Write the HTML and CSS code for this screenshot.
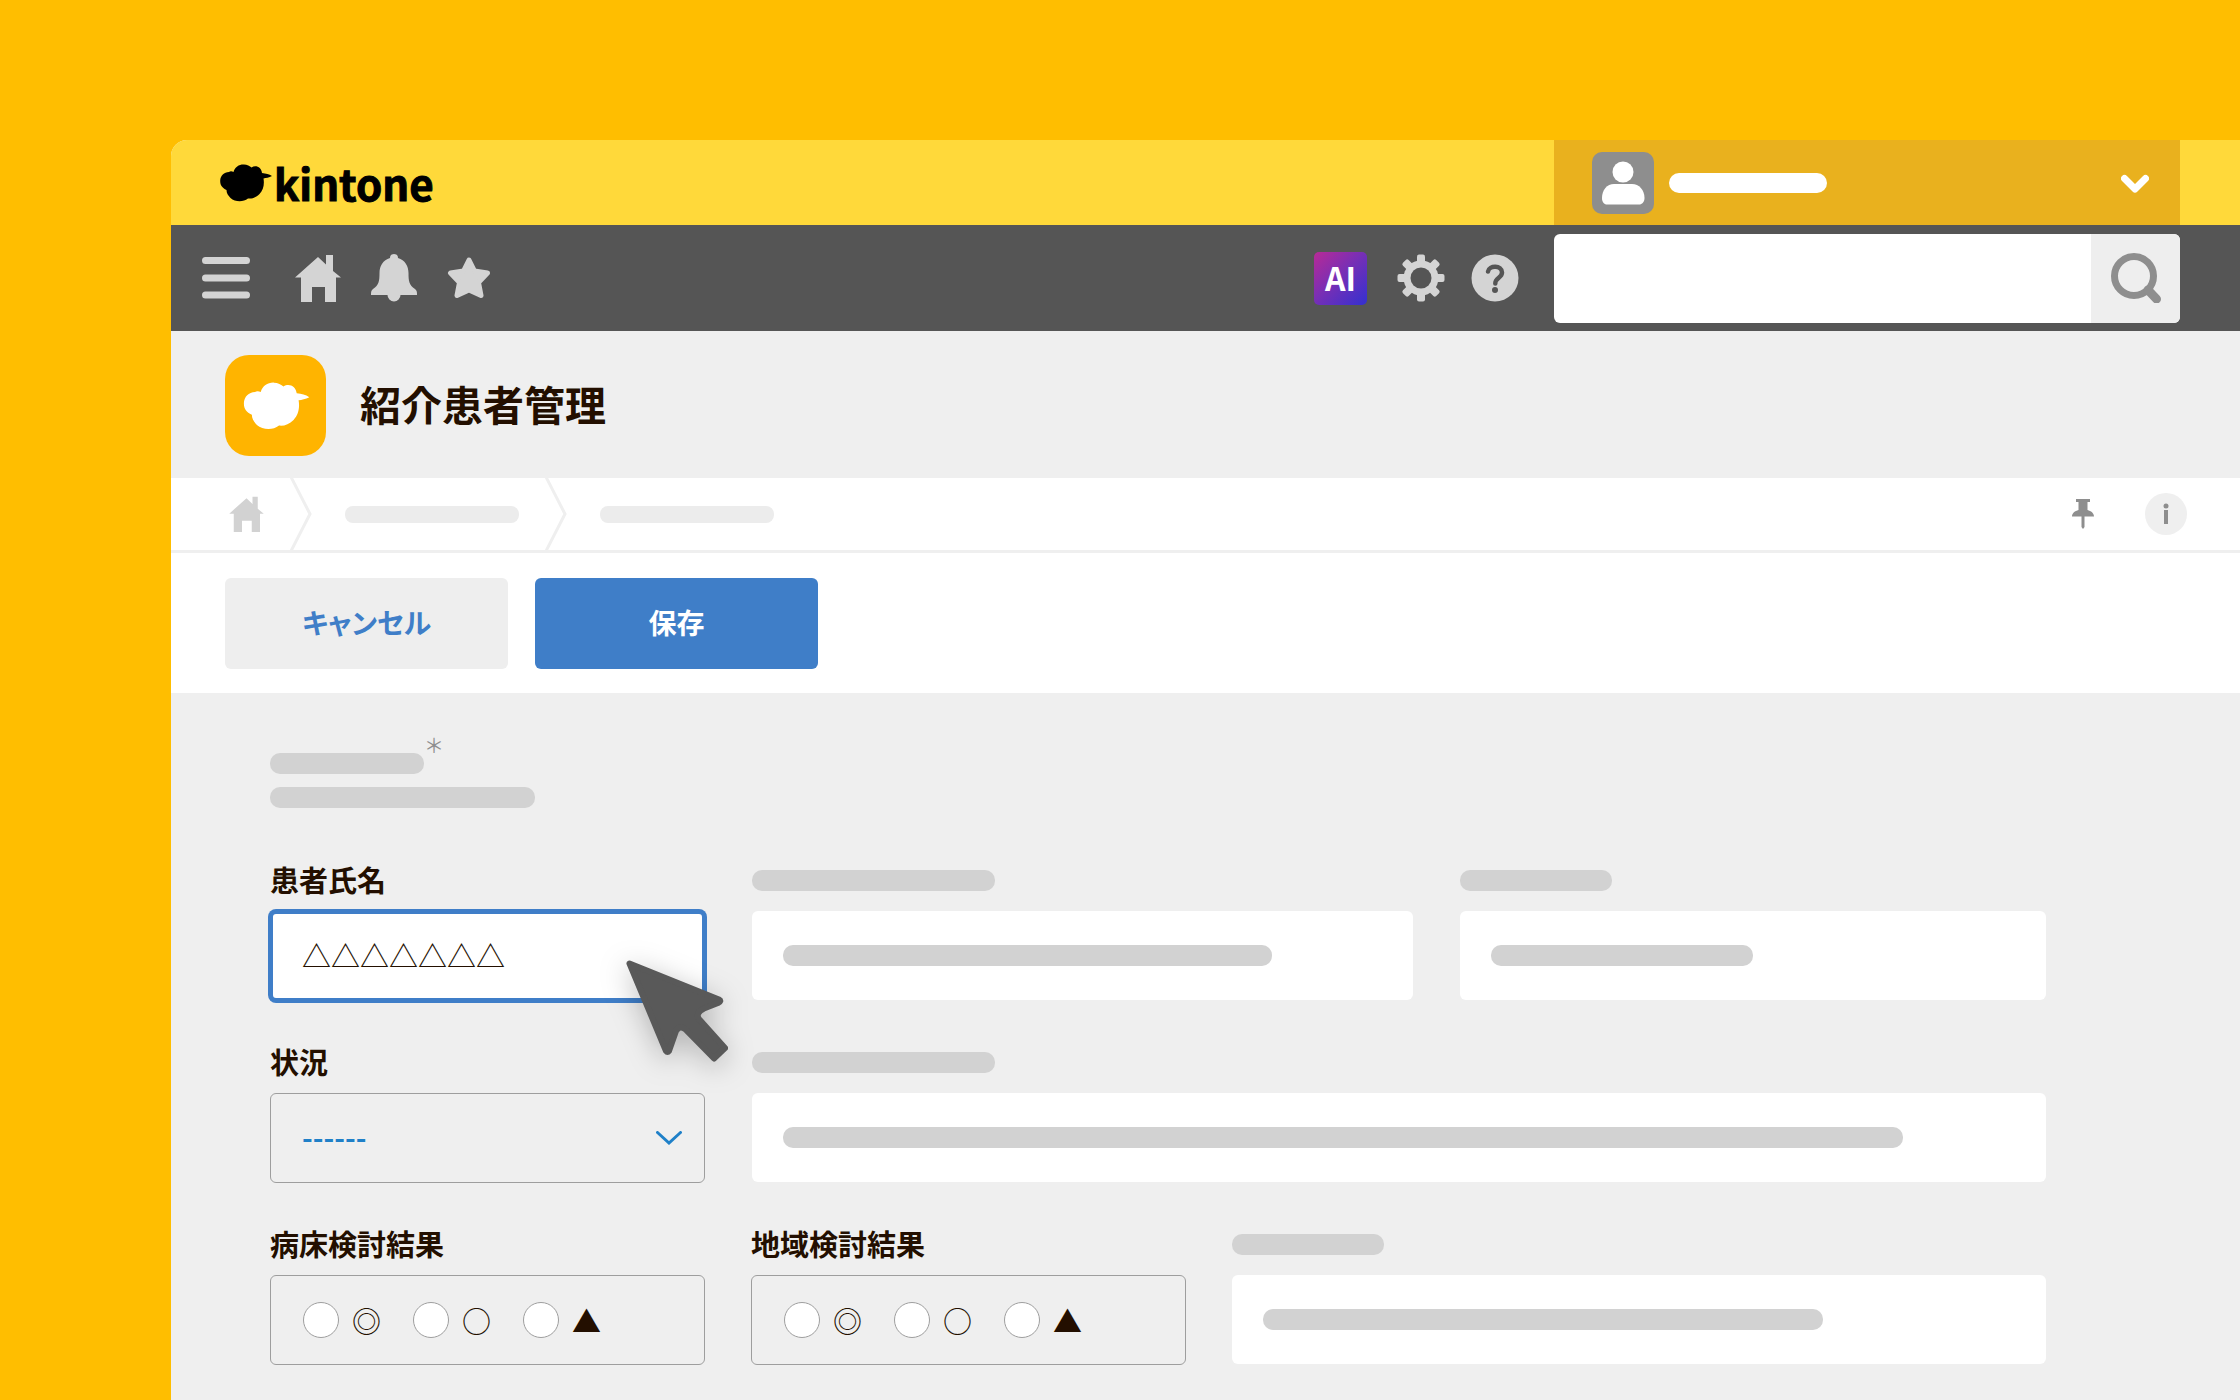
FILE: index.html
```html
<!DOCTYPE html>
<html lang="ja">
<head>
<meta charset="utf-8">
<title>紹介患者管理</title>
<link rel="stylesheet" href="styles.css">
</head>
<body>
<svg width="0" height="0" class="symbols" aria-hidden="true">
  <symbol id="cloud" viewBox="0 0 52 38">
    <path d="M9 8C10 7 12 7 13.500 8C15 3 19 0.300 24 0.500C27 0.500 30 2 31.500 3.500C36 0.500 41.500 3.500 42 9C46 9.500 49 10 52 12C49 13.500 46 14 43.500 14.500C44.500 20 43.500 26 39.500 30C36 33.500 32 35 28 34.500C23 38.500 15 38 10.500 34C8 31.500 6.500 29 6.500 26C2 24 0 21 0.200 16.500C0.400 12 4 8 9 8Z"/>
  </symbol>
  <symbol id="home" viewBox="0 0 46 48">
    <path d="M23 3L31 10.500V1H38V17L46 23.500H41V48H30V33H17V48H6V23.500H0Z"/>
  </symbol>
</svg>
<div class="window">
  <header class="brandbar">
    <a class="brand" href="#"><svg class="brand-mark" aria-hidden="true"><use href="#cloud"/></svg><span>kintone</span></a>
    <button class="account" type="button" aria-label="アカウント">
      <svg class="avatar" viewBox="0 0 62 62" aria-hidden="true"><rect width="62" height="62" rx="10" fill="#8e8e8e"/><circle cx="31" cy="20" r="10.500" fill="#fff"/><path d="M10 46C10 38 15 32 22 32H40C47 32 52.500 38 52.500 46C52.500 50 50 52.500 47 52.500H15C12 52.500 10 50 10 46Z" fill="#fff"/></svg>
      <span class="account-name"></span>
      <svg class="account-arrow" viewBox="0 0 28 20" aria-hidden="true"><path d="M3.500 5.500L14 16L24.500 5.500" fill="none" stroke="#fff" stroke-width="7" stroke-linecap="round" stroke-linejoin="round"/></svg>
    </button>
  </header>

  <nav class="toolbar">
    <button class="tool tool-menu" type="button" aria-label="メニュー"><svg width="48" height="42" viewBox="0 0 48 42"><path d="M3.500 3.500H44.500M3.500 21H44.500M3.500 38H44.500" stroke="#d4d4d4" stroke-width="7" stroke-linecap="round"/></svg></button>
    <a class="tool" href="#" aria-label="ホーム"><svg width="46" height="48"><use href="#home"/></svg></a>
    <button class="tool" type="button" aria-label="通知"><svg width="46" height="48" viewBox="0 0 46 48"><path d="M19 4A4 4 0 0 1 27 4C34 6 37.500 12 37.500 19C37.500 27 38 31 44 35C46 36.500 46 38 46 41H29.500A6.500 6.500 0 0 1 16.500 41H0C0 38 0 36.500 2 35C8 31 8.500 27 8.500 19C8.500 12 12 6 19 4Z"/></svg></button>
    <button class="tool tool-star" type="button" aria-label="お気に入り"><svg width="44" height="42" viewBox="0 0 44 42"><path d="M22 3L27.500 14L40.500 16L31.500 25.500L34 38.500L22 33L10 38.500L12.500 25.500L3.500 16L16.500 14Z" stroke="#d4d4d4" stroke-width="5" stroke-linejoin="round"/></svg></button>
    <div class="tool-group">
      <button class="ai" type="button">AI</button>
      <button class="tool" type="button" aria-label="設定"><svg width="48" height="48" viewBox="-24 -24 48 48"><g id="teeth"><rect x="-4" y="-23.500" width="8" height="47" rx="2"/><rect x="-23.500" y="-4" width="47" height="8" rx="2"/></g><use href="#teeth" transform="rotate(45)"/><circle r="17.500"/><circle r="10.500" fill="#555"/></svg></button>
      <button class="tool" type="button" aria-label="ヘルプ"><svg width="48" height="48" viewBox="0 0 48 48"><circle cx="24" cy="24" r="23.500"/><path d="M17 17.500C18 11 31 11 31 18.500C31 24 24.300 23.500 24.300 29.500" fill="none" stroke="#555" stroke-width="4.500" stroke-linecap="round"/><circle cx="24" cy="36" r="3" fill="#555"/></svg></button>
    </div>
    <form class="search" role="search">
      <input type="search" aria-label="検索">
      <button type="submit" aria-label="検索する"><svg width="50" height="50" viewBox="0 0 50 50"><circle cx="23" cy="23" r="19.500"/><path d="M37 37L45.500 46" stroke-width="9"/></svg></button>
    </form>
  </nav>

  <div class="apphead">
    <span class="appicon"><svg width="67" height="48" aria-hidden="true"><use href="#cloud"/></svg></span>
    <h1>紹介患者管理</h1>
  </div>

  <div class="crumbs">
    <a href="#" aria-label="ホーム"><svg class="crumb-home" width="35" height="36"><use href="#home"/></svg></a>
    <svg class="crumb-sep" viewBox="0 0 22 74"><path d="M1 0L20 37L1 74"/></svg>
    <span class="crumb-bar"></span>
    <svg class="crumb-sep" viewBox="0 0 22 74"><path d="M1 0L20 37L1 74"/></svg>
    <span class="crumb-bar"></span>
    <button class="pin" type="button" aria-label="固定"><svg width="22" height="30" viewBox="0 0 22 30"><path d="M4 0H18V3H15.500V11C19 12 22 14 22 17.500H12.500V28L11 30L9.500 28V17.500H0C0 14 3 12 6.500 11V3H4Z"/></svg></button>
    <button class="info" type="button" aria-label="情報"><svg width="42" height="42" viewBox="0 0 42 42"><circle cx="21" cy="21" r="21" fill="#efefef"/><circle cx="21" cy="13" r="2.500"/><rect x="19" y="17" width="4" height="14"/></svg></button>
  </div>

  <div class="actions">
    <button class="btn" type="button">キャンセル</button>
    <button class="btn btn-primary" type="submit" form="record">保存</button>
  </div>

  <form class="record" id="record">
    <div class="intro">
      <div class="intro-head"><span class="bar intro-name"></span><span class="required">＊</span></div>
      <span class="bar intro-note"></span>
    </div>

    <div class="row row-name">
      <div class="field">
        <label for="patient">患者氏名</label>
        <input class="box focused" id="patient" type="text" value="△△△△△△△">
        <svg class="cursor" viewBox="0 0 105 105" aria-hidden="true"><path d="M5.500 5.500L95 41.500Q98 43 94 45L80 50.500Q71 55 75 61L101 90L90 100.500L61 71Q55.500 67 52 73L45 93Q43.500 95 42 93Z" fill="#595959" stroke="#595959" stroke-width="6" stroke-linejoin="round"/></svg>
      </div>
      <div class="field"><span class="caption"><span class="bar w-mid"></span></span><div class="box filled"><span class="bar" style="flex-basis:489px"></span></div></div>
      <div class="field"><span class="caption"><span class="bar w-short"></span></span><div class="box filled"><span class="bar" style="flex-basis:262px"></span></div></div>
    </div>

    <div class="row row-status">
      <div class="field">
        <label for="status">状況</label>
        <div class="select">
          <select class="box" id="status"><option>------</option></select>
          <svg class="select-arrow" viewBox="0 0 26 14" aria-hidden="true"><path d="M1.500 1.500L13 12L24.500 1.500"/></svg>
        </div>
      </div>
      <div class="field"><span class="caption"><span class="bar w-mid"></span></span><div class="box filled"><span class="bar" style="flex-basis:1120px"></span></div></div>
    </div>

    <div class="row row-result">
      <fieldset class="field">
        <legend>病床検討結果</legend>
        <div class="box choices">
          <label><input type="radio" name="bed">◎</label>
          <label><input type="radio" name="bed">○</label>
          <label><input type="radio" name="bed">▲</label>
        </div>
      </fieldset>
      <fieldset class="field">
        <legend>地域検討結果</legend>
        <div class="box choices">
          <label><input type="radio" name="area">◎</label>
          <label><input type="radio" name="area">○</label>
          <label><input type="radio" name="area">▲</label>
        </div>
      </fieldset>
      <div class="field"><span class="caption"><span class="bar w-short"></span></span><div class="box filled"><span class="bar" style="flex-basis:560px"></span></div></div>
    </div>
  </form>
</div>
</body>
</html>
```
FILE: styles.css
```css
* { box-sizing: border-box; }

body {
  margin: 0;
  min-height: 100vh;
  display: flex;
  padding: 140px 0 0 171px;
  background: #ffbe00;
  color: #230f00;
  font-family: "Noto Sans CJK JP", sans-serif;
}

button, input, select {
  font: inherit;
  color: inherit;
  margin: 0;
  padding: 0;
  border: 0;
  background: none;
}

svg { display: block; }
.symbols { position: absolute; }

.window {
  flex: 1;
  min-width: 0;
  display: flex;
  flex-direction: column;
  background: #efefef;
  border-top-left-radius: 16px;
  overflow: hidden;
}

/* brand bar */
.brandbar {
  display: flex;
  justify-content: space-between;
  height: 85px;
  padding: 0 60px 0 49px;
  background: #ffd93a;
}
.brand {
  display: flex;
  align-items: center;
  gap: 2px;
  color: #000;
  font-size: 42px;
  font-weight: 700;
  line-height: 84px;
  text-decoration: none;
  -webkit-text-stroke: 1px #000;
}
.brand-mark { width: 52px; height: 38px; }
.account {
  display: flex;
  align-items: center;
  width: 626px;
  padding: 0 31px 0 38px;
  background: #e9b11e;
}
.avatar { width: 62px; height: 62px; }
.account-name {
  width: 158px;
  height: 20px;
  margin-left: 15px;
  border-radius: 10px;
  background: #fff;
}
.account-arrow { width: 28px; height: 20px; margin-left: auto; }

/* toolbar */
.toolbar {
  display: flex;
  align-items: center;
  height: 106px;
  padding: 0 60px 0 31px;
  background: #555;
}
.tool { margin-right: 30px; fill: #d4d4d4; }
.tool-menu { margin-right: 45px; }
.tool-group {
  display: flex;
  align-items: center;
  margin-left: auto;
}
.tool-group .tool { margin-right: 0; margin-left: 26px; }
.tool-group .ai + .tool { margin-left: 30px; }
.ai {
  width: 53px;
  height: 53px;
  padding-bottom: 2px;
  border-radius: 5px;
  background: linear-gradient(135deg, #b82a96, #7a2fb4 45%, #3330d0);
  color: #fff;
  font-size: 32px;
  font-weight: 700;
  line-height: 51px;
}
.search {
  display: flex;
  width: 626px;
  height: 89px;
  margin-left: 35px;
  border-radius: 6px;
  background: #fff;
  overflow: hidden;
}
.search input { flex: 1; min-width: 0; padding: 0 24px; font-size: 28px; }
.search button {
  display: flex;
  align-items: center;
  justify-content: center;
  width: 89px;
  background: #eee;
}
.search svg { fill: none; stroke: #8e8e8e; stroke-width: 7; stroke-linecap: round; }

/* app heading */
.apphead {
  display: flex;
  align-items: center;
  gap: 34px;
  height: 147px;
  padding: 2px 54px 0;
}
.appicon {
  display: flex;
  align-items: center;
  justify-content: center;
  width: 101px;
  height: 101px;
  padding-left: 2px;
  border-radius: 24px;
  background: #ffb400;
  fill: #fff;
}
h1 {
  margin: 0;
  padding-bottom: 6px;
  font-size: 41px;
  font-weight: 700;
  line-height: 60px;
}

/* breadcrumbs */
.crumbs {
  display: flex;
  align-items: center;
  height: 75px;
  padding: 0 53px 0 58px;
  background: #fff;
  border-bottom: 3px solid #efefef;
}
.crumb-home { fill: #d2d2d2; }
.crumb-sep {
  width: 22px;
  height: 74px;
  margin: 0 33px 0 26px;
  fill: none;
  stroke: #efefef;
  stroke-width: 3;
}
.crumb-bar { width: 174px; height: 17px; border-radius: 8px; background: #ececec; }
.pin { margin-left: auto; fill: #8e8e8e; }
.info { margin-left: 51px; fill: #8e8e8e; }

/* actions */
.actions {
  display: flex;
  gap: 27px;
  padding: 25px 54px 24px;
  background: #fff;
}
.btn {
  width: 283px;
  height: 91px;
  padding-bottom: 3px;
  border-radius: 6px;
  background: #eee;
  color: #3f7ec8;
  font-size: 28px;
  font-weight: 700;
  font-feature-settings: "palt";
}
.btn-primary { background: #3f7ec8; color: #fff; }

/* record form */
.record {
  display: flex;
  flex-direction: column;
  gap: 45px;
  padding: 46px 194px 34px 99px;
}
.bar {
  flex: 0 1 auto;
  height: 21px;
  border-radius: 10px;
  background: #d2d2d2;
}
.intro { display: flex; flex-direction: column; gap: 13px; margin-bottom: 10px; }
.intro-head { display: flex; align-items: flex-end; height: 35px; }
.intro-name { width: 154px; }
.intro-note { width: 265px; }
.required { align-self: flex-start; font-size: 20px; line-height: 12px; color: #8e8e8e; }

.row { display: grid; }
.row-name { grid-template-columns: 435fr 660fr 586fr; gap: 47px; }
.row-status { grid-template-columns: 435fr 1294fr; gap: 47px; }
.row-result { grid-template-columns: 435fr 435fr 814fr; gap: 46px; }

.field {
  position: relative;
  min-width: 0;
  margin: 0;
  padding: 0;
  border: 0;
}
.field > label, legend, .caption {
  display: flex;
  align-items: center;
  height: 34px;
  margin-bottom: 14px;
  padding: 0;
  font-size: 29px;
  font-weight: 700;
  line-height: 32px;
}
.field > label, legend { padding-bottom: 2px; }
.w-mid { width: 243px; }
.w-short { width: 152px; }

.box {
  display: flex;
  align-items: center;
  width: 100%;
  height: 90px;
  padding: 0 31px;
  border: 1px solid #9e9e9e;
  border-radius: 6px;
  font-size: 29px;
}
.filled { height: 89px; border: 0; background: #fff; }
.focused {
  padding: 0 29px 2px;
  border: 3px solid #3f7ec8;
  background: #fff;
  box-shadow: 0 0 0 2px #3f7ec8;
}
.cursor {
  position: absolute;
  left: 354px;
  top: 95px;
  width: 105px;
  height: 105px;
  overflow: visible;
  filter: drop-shadow(0 6px 14px rgba(0, 0, 0, 0.25));
}

.select { position: relative; }
.select select {
  padding-bottom: 4px;
  appearance: none;
  color: #1f80c8;
  font-weight: 700;
}
.select-arrow {
  position: absolute;
  right: 23px;
  top: 38px;
  width: 26px;
  height: 14px;
  fill: none;
  stroke: #1f80c8;
  stroke-width: 3;
  stroke-linecap: round;
  pointer-events: none;
}
.row-name, .row-status { height: 137px; }

.choices { gap: 32px; padding-left: 32px; }
.choices label { display: flex; align-items: center; gap: 13px; line-height: 40px; }
.choices input {
  appearance: none;
  width: 36px;
  height: 36px;
  border: 1px solid #9e9e9e;
  border-radius: 50%;
  background: #fff;
}
```
